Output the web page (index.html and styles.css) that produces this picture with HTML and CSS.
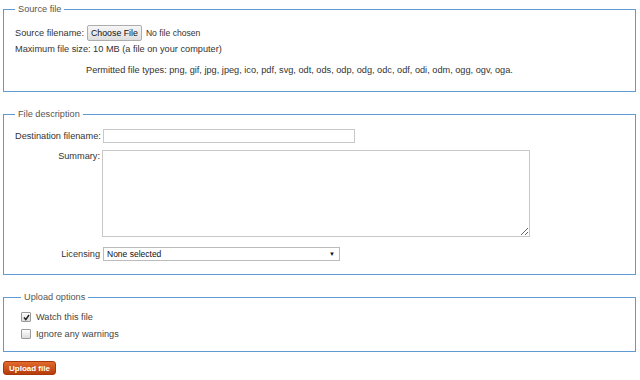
FILE: index.html
```html
<!DOCTYPE html>
<html lang="en">
<head>
  <meta charset="UTF-8">
  <title>Upload file</title>
  <link rel="stylesheet" href="styles.css">
</head>
<body>

  <form class="upload">
    <fieldset class="box source">
      <legend>Source file</legend>
      <div class="line">
        <label for="wpUploadFile">Source filename:</label>
        <input type="file" id="wpUploadFile">
      </div>
      <div class="line">Maximum file size: 10 MB (a file on your computer)</div>
      <div class="line types">Permitted file types: png, gif, jpg, jpeg, ico, pdf, svg, odt, ods, odp, odg, odc, odf, odi, odm, ogg, ogv, oga.</div>
    </fieldset>

    <fieldset class="box desc">
      <legend>File description</legend>
      <div class="row">
        <label for="wpDestFile">Destination filename:</label>
        <input type="text" id="wpDestFile" class="dest">
      </div>
      <div class="row">
        <label for="wpUploadDescription" class="top">Summary:</label>
        <textarea id="wpUploadDescription"></textarea>
      </div>
      <div class="row">
        <label for="wpLicense">Licensing</label>
        <div class="select" id="wpLicense">
          <span>None selected</span>
          <span class="arrow">&#9660;</span>
        </div>
      </div>
    </fieldset>

    <fieldset class="box options">
      <legend>Upload options</legend>
      <label class="check">
        <span class="tick">
          <svg width="7" height="7" viewBox="0 0 7 7"><path d="M1 3.6 L2.8 5.6 L6 1" fill="none" stroke="#222" stroke-width="1.5"/></svg>
        </span>
        Watch this file
      </label>
      <label class="check">
        <span class="tick"></span>
        Ignore any warnings
      </label>
    </fieldset>

    <button type="button" class="submit">Upload file</button>
  </form>

</body>
</html>
```

FILE: styles.css
```css
body {
  font-family: 'Liberation Sans', Arial, sans-serif;
  font-size: 9.2px;
  color: #333;
  background: #fff;
  margin: 0;
  padding: 4px 4px 0 3px;
}

.box {
  border: 1px solid #5f9bd0;
  margin: 0;
  padding: 0 11px;
  min-width: 0;
}

.box legend {
  color: #555;
  padding: 0 3px;
  margin-left: 0;
  font-size: 9.2px;
}

.source {
  height: 86px;
}

.source .line {
  display: flex;
  align-items: center;
  height: 16px;
}

.source .line:first-of-type {
  margin-top: 11px;
}

.source .line label {
  margin-right: 3px;
}

.source .types {
  padding-left: 71px;
  margin-top: 5px;
}

input[type=file] {
  font-family: inherit;
  font-size: 8.6px;
  color: #333;
}

input[type=file]::file-selector-button {
  font-family: inherit;
  font-size: 8.8px;
  color: #111;
  height: 16px;
  padding: 0 3px;
  margin-right: 4px;
  border: 1px solid #adadad;
  border-radius: 2px;
  background: linear-gradient(#f6f6f6, #dedede);
}

.desc {
  margin-top: 17px;
  height: 164px;
}

.desc .row {
  display: flex;
  align-items: center;
  margin-top: 7px;
}

.desc .row:first-of-type {
  margin-top: 10px;
}

.desc .row label {
  width: 85px;
  white-space: nowrap;
  text-align: right;
}

.desc .row label.top {
  align-self: flex-start;
  padding-top: 1px;
}

.dest {
  width: 252px;
  height: 14px;
  box-sizing: border-box;
  border: 1px solid #c8c8c8;
  padding: 0 2px;
  margin: 0 0 0 3px;
}

textarea {
  width: 428px;
  height: 87px;
  box-sizing: border-box;
  border: 1px solid #c8c8c8;
  margin: 0 0 0 2px;
  padding: 2px;
  resize: both;
}

.desc .row:last-of-type {
  margin-top: 10px;
}

.select {
  width: 237px;
  height: 14px;
  box-sizing: border-box;
  border: 1px solid #bbb;
  margin-left: 3px;
  padding: 0 4px 0 3px;
  display: flex;
  align-items: center;
  justify-content: space-between;
  font-size: 8.5px;
  color: #111;
}

.select .arrow {
  font-size: 6px;
}

.options {
  margin-top: 17px;
  height: 58px;
  padding-left: 17px;
}

.check {
  display: flex;
  align-items: center;
  gap: 5px;
  height: 12px;
  margin-top: 9px;
  margin-bottom: 5px;
  font-size: 9.2px;
  color: #444;
}

.check + .check {
  margin-top: 4px;
}

.tick {
  width: 8px;
  height: 8px;
  border: 1px solid #9a9a9a;
  border-radius: 1px;
  background: linear-gradient(#fdfdfd, #dcdcdc);
  display: flex;
  align-items: center;
  justify-content: center;
}

.submit {
  margin-top: 9px;
  height: 14px;
  padding: 0 5px;
  font-family: inherit;
  font-size: 8px;
  font-weight: bold;
  color: #fff;
  border: 1px solid #a4380c;
  border-radius: 3px;
  background: linear-gradient(#e26a2c, #b63d0b);
}
```
